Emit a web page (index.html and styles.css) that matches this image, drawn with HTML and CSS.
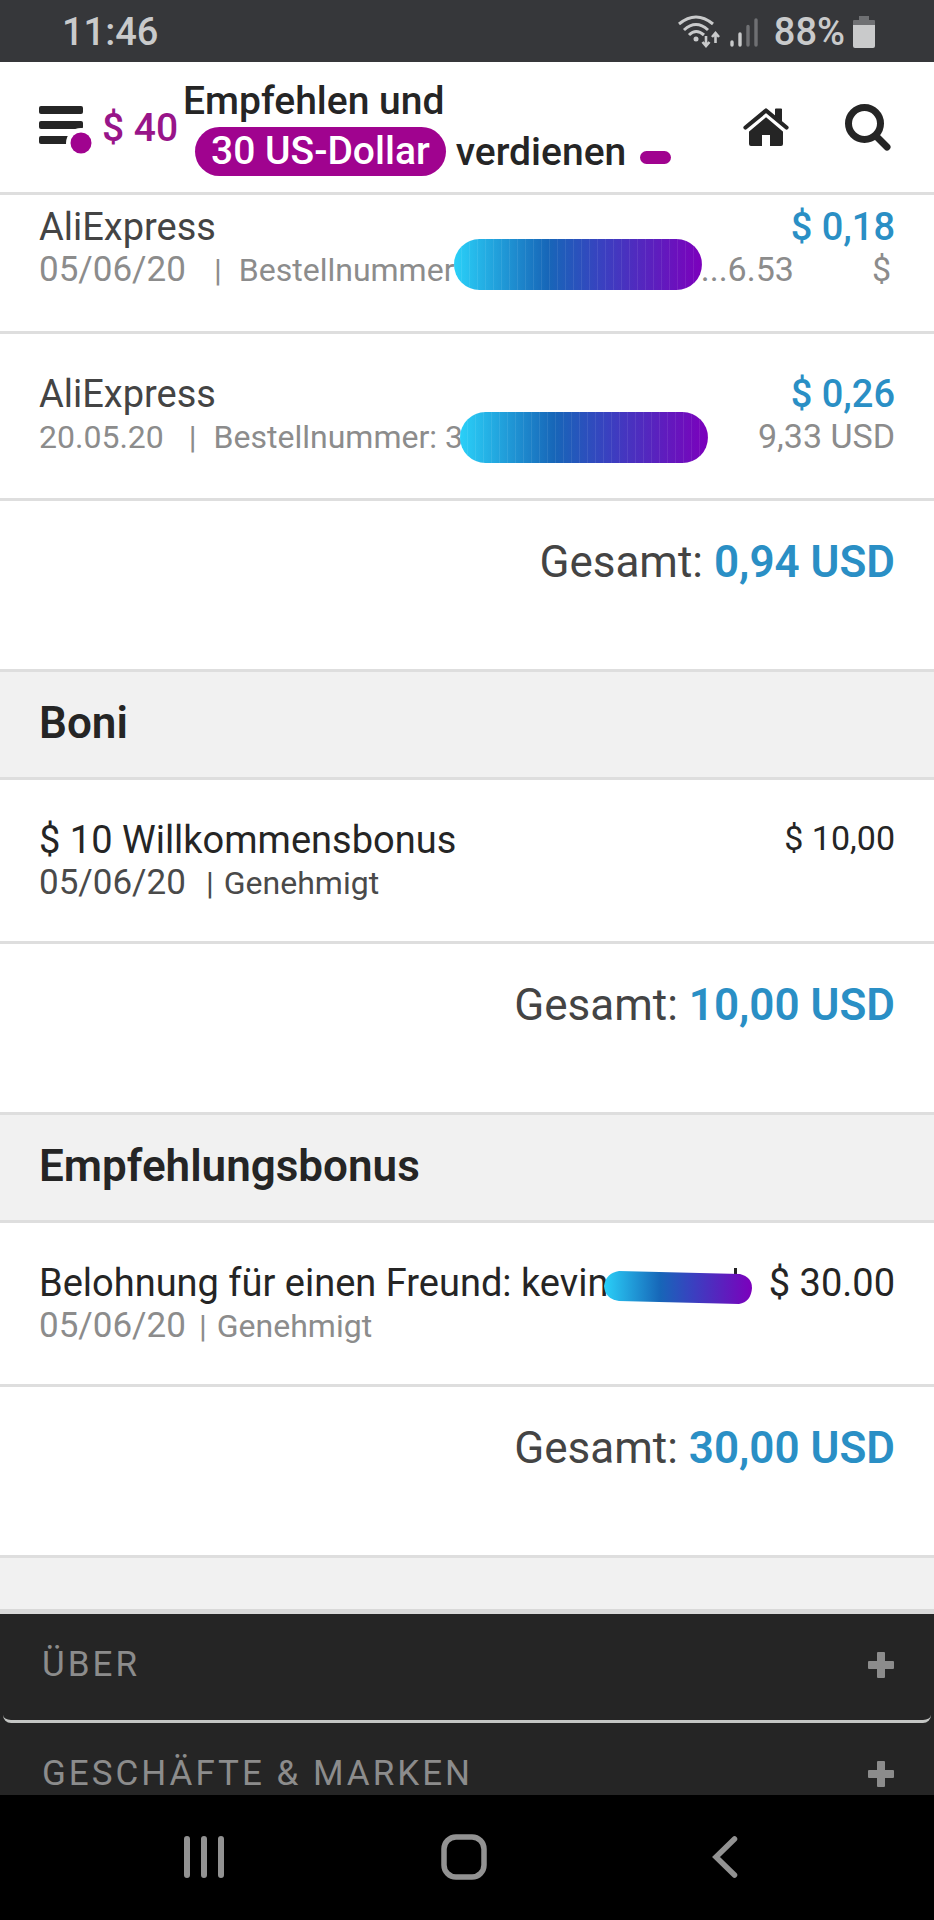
FILE: index.html
```html
<!DOCTYPE html>
<html lang="de">
<head>
<meta charset="utf-8">
<meta name="viewport" content="width=device-width, initial-scale=1">
<title>Cashback-Übersicht</title>
<link rel="stylesheet" href="styles.css">
</head>
<body>
<div class="screen">
  <div class="status">
    <span class="status-time">11:46</span>
    <div class="status-icons">
      <svg width="42" height="34" viewBox="0 0 42 34" aria-hidden="true">
        <g fill="none" stroke="#c9cacb" stroke-width="3">
          <path d="M1 9Q18-5 35 9"/>
          <path d="M6 15Q18 4 30 15"/>
          <path d="M11 20Q18 13 26 20"/>
          <path stroke-width="2.6" d="M28 21v10M24.500 27l3.500 4 3.500-4M37.500 28V18M34 22l3.500-4 3.500 4"/>
        </g>
        <circle cx="18" cy="24" r="2.500" fill="#c9cacb"/>
      </svg>
      <svg class="signal" width="28" height="31" viewBox="0 0 28 31" aria-hidden="true">
        <g stroke-width="3.400" stroke-linecap="round">
          <path stroke="#c9cacb" d="M2 25v3M10 17v11"/>
          <path stroke="#6f7073" d="M18 9.500V28M26 3v25"/>
        </g>
      </svg>
      <span class="status-level">88%</span>
      <svg width="22" height="32" viewBox="0 0 22 32" aria-hidden="true">
        <path fill="#6f7073" d="M6 0h10v4h5q1 0 1 1v5H0V5q0-1 1-1h5z"/>
        <path fill="#c9cacb" d="M0 9h22v21q0 2-2 2H2q-2 0-2-2z"/>
      </svg>
    </div>
  </div>

  <header class="header">
    <button class="menu" aria-label="Menü">
      <svg width="53" height="48" viewBox="0 0 53 48" aria-hidden="true">
        <g fill="#252525">
          <rect width="44" height="8" rx="2"/>
          <rect y="15" width="44" height="8" rx="2"/>
          <rect y="30" width="44" height="8" rx="2"/>
        </g>
        <circle cx="42" cy="37" r="15" fill="#fff"/>
        <circle cx="42" cy="37" r="10.500" fill="#a0038f"/>
      </svg>
    </button>
    <a class="balance" href="#">$ 40</a>
    <a class="promo" href="#">
      <span class="promo-top">Empfehlen und</span>
      <span class="promo-bottom"><span class="promo-pill">30 US-Dollar</span><span>verdienen</span><span class="promo-dash"></span></span>
    </a>
    <nav class="actions">
      <a href="#" aria-label="Startseite">
        <svg width="46" height="40" viewBox="0 0 46 40" aria-hidden="true">
          <path fill="#252525" d="M6 21L23 7l17 14v15q0 2-2 2H27V27h-8v11H8q-2 0-2-2z"/>
          <path fill="#252525" d="M32 1h7v16l-7-6z"/>
          <path fill="none" stroke="#fff" stroke-width="8" d="M0 23.500L23 4l23 19.500"/>
          <path fill="#252525" d="M32 1q0-.500 1-.500h5q1 0 1 1V14l-7-6z"/>
          <path fill="none" stroke="#252525" stroke-width="4.200" stroke-linecap="round" stroke-linejoin="round" d="M2.500 19.500L23 2.500l20.500 17"/>
        </svg>
      </a>
      <button aria-label="Suchen">
        <svg width="46" height="47" viewBox="0 0 46 47" aria-hidden="true">
          <circle cx="19.500" cy="19.500" r="16" fill="none" stroke="#252525" stroke-width="7"/>
          <path fill="none" stroke="#252525" stroke-width="7" stroke-linecap="round" d="M31 32l11 11"/>
        </svg>
      </button>
    </nav>
  </header>

  <main class="content">
    <section>
      <article class="row row-first">
        <div>
          <div class="name">AliExpress</div>
          <div class="meta"><span class="date">05/06/20</span><span class="bar-wide">|</span><span>Bestellnummer</span></div>
        </div>
        <div class="side">
          <div class="amount cash">$ 0,18</div>
          <div class="price"><span>...6.53</span><span class="currency">$</span></div>
        </div>
        <span class="redact redact-a"></span>
      </article>
      <article class="row">
        <div>
          <div class="name">AliExpress</div>
          <div class="meta"><span>20.05.20</span><span class="bar-wide">|</span><span>Bestellnummer: 3</span></div>
        </div>
        <div class="side">
          <div class="amount cash">$ 0,26</div>
          <div class="price">9,33 USD</div>
        </div>
        <span class="redact redact-b"></span>
      </article>
      <p class="total">Gesamt: <strong>0,94 USD</strong></p>
    </section>

    <section>
      <h2 class="heading">Boni</h2>
      <article class="row row-bonus">
        <div>
          <div class="name dark">$ 10 Willkommensbonus</div>
          <div class="meta meta-dark"><span class="date">05/06/20</span><span class="bar-mid">|</span><span>Genehmigt</span></div>
        </div>
        <div class="side"><div class="price dark">$ 10,00</div></div>
      </article>
      <p class="total">Gesamt: <strong>10,00 USD</strong></p>
    </section>

    <section>
      <h2 class="heading">Empfehlungsbonus</h2>
      <article class="row row-bonus">
        <div>
          <div class="name dark">Belohnung für einen Freund: kevin</div>
          <div class="meta"><span class="date">05/06/20</span><span class="bar-tight">|</span><span>Genehmigt</span></div>
        </div>
        <div class="side"><div class="amount dark">$ 30.00</div></div>
        <svg class="redact-name" width="148" height="36" viewBox="0 0 148 36" aria-hidden="true">
          <defs>
            <linearGradient id="ink">
              <stop offset="0" stop-color="#2ad0f8"/>
              <stop offset=".380" stop-color="#1766b8"/>
              <stop offset=".600" stop-color="#3a40c0"/>
              <stop offset="1" stop-color="#7c00bc"/>
            </linearGradient>
          </defs>
          <path fill="#252525" d="M130 0h3v10h-3z"/>
          <path fill="url(#ink)" d="M15 3L136 6Q148 9 148 20Q147 34 135 36L15 33Q1 31 0 18Q2 5 15 3z"/>
        </svg>
      </article>
      <p class="total">Gesamt: <strong>30,00 USD</strong></p>
    </section>

    <div class="spacer"></div>

    <footer class="footer">
      <button class="fold">
        <span>ÜBER</span>
        <svg width="26" height="26" viewBox="0 0 26 26" aria-hidden="true"><path fill="#8c8c8c" d="M10 0h6q1 0 1 1v8h8q1 0 1 1v6q0 1-1 1h-8v8q0 1-1 1h-6q-1 0-1-1v-8H1q-1 0-1-1v-6q0-1 1-1h8V1q0-1 1-1z"/></svg>
      </button>
      <button class="fold">
        <span>GESCHÄFTE &amp; MARKEN</span>
        <svg width="26" height="26" viewBox="0 0 26 26" aria-hidden="true"><path fill="#8c8c8c" d="M10 0h6q1 0 1 1v8h8q1 0 1 1v6q0 1-1 1h-8v8q0 1-1 1h-6q-1 0-1-1v-8H1q-1 0-1-1v-6q0-1 1-1h8V1q0-1 1-1z"/></svg>
      </button>
    </footer>
  </main>

  <nav class="system">
    <button aria-label="Letzte Apps">
      <svg width="40" height="46" viewBox="0 0 40 46" aria-hidden="true"><path fill="none" stroke="#929292" stroke-width="6" stroke-linecap="round" d="M3 5v36M20 5v36M37 5v36"/></svg>
    </button>
    <button aria-label="Home">
      <svg width="46" height="46" viewBox="0 0 46 46" aria-hidden="true"><rect x="3" y="3" width="40" height="40" rx="12" fill="none" stroke="#929292" stroke-width="5.500"/></svg>
    </button>
    <button aria-label="Zurück">
      <svg width="26" height="46" viewBox="0 0 26 46" aria-hidden="true"><path fill="none" stroke="#929292" stroke-width="5.500" stroke-linecap="round" d="M22.500 5L4 23l18.500 18"/></svg>
    </button>
  </nav>
</div>
</body>
</html>
```

FILE: styles.css
```css
* { box-sizing: border-box; }

body {
  margin: 0;
  background: #fff;
  color: #444;
  font-family: Roboto, "Liberation Sans", sans-serif;
}

button {
  margin: 0;
  padding: 0;
  border: 0;
  background: none;
  color: inherit;
  font: inherit;
}

a { color: inherit; text-decoration: none; }
svg { display: block; }

.screen {
  display: flex;
  flex-direction: column;
  height: 100vh;
}

/* Phone status bar */
.status {
  display: flex;
  align-items: center;
  justify-content: space-between;
  flex: none;
  padding: 9px 59px 7px 62px;
  background: #36373a;
  color: #c9cacb;
  font-size: 38px;
  font-weight: 500;
  line-height: 46px;
}

.status-icons { display: flex; align-items: center; }
.signal { margin-left: 10px; }
.status-level { margin: 0 8px 0 16px; }

/* Page header */
.header {
  display: flex;
  align-items: center;
  flex: none;
  padding: 17px 43px 16px 39px;
  border-bottom: 3px solid #dedede;
  color: #252525;
  font-size: 39px;
  font-weight: 500;
}

.menu { padding-top: 4px; }

.balance {
  width: 81px;
  margin-left: 10px;
  color: #981589;
  white-space: nowrap;
}

.promo {
  display: flex;
  flex-direction: column;
  gap: 4px;
  line-height: 44px;
  white-space: nowrap;
}

.promo-bottom {
  display: flex;
  align-items: center;
  padding-left: 12px;
}

.promo-pill {
  margin-right: 10px;
  padding: 2px 16px 3px;
  border-radius: 25px;
  background: #a0038f;
  color: #fff;
}

.promo-dash {
  width: 31px;
  height: 13px;
  margin: 12px 0 0 14px;
  border-radius: 7px;
  background: #a0038f;
}

.actions {
  display: flex;
  align-items: center;
  gap: 56px;
  margin-left: auto;
}

/* Transactions */
.content {
  display: flex;
  flex: 1;
  flex-direction: column;
  min-height: 0;
  overflow: hidden;
}

.content > * { flex: none; }

.row {
  position: relative;
  display: flex;
  justify-content: space-between;
  padding: 38px 39px 40px;
  border-bottom: 3px solid #dedede;
  white-space: nowrap;
}

.row-first { padding-top: 10px; }
.row-bonus { padding-bottom: 37px; }

.name, .amount {
  font-size: 38px;
  line-height: 44px;
}

.meta {
  display: flex;
  align-items: baseline;
  color: #8c8c8c;
  font-size: 32px;
  line-height: 42px;
}

.meta-dark { color: #4a4a4a; }
.date { min-width: 150px; font-size: 35px; }
.bar-wide { margin: 0 17px 0 25px; }
.bar-mid { margin: 0 10px 0 17px; }
.bar-tight { margin: 0 10px; }

.side { text-align: right; }
.cash { color: #2a8fc5; font-weight: 500; }

.price {
  color: #8c8c8c;
  font-size: 34px;
  line-height: 40px;
}

.currency { margin: 0 4px 0 78px; }
.amount.dark, .price.dark, .name.dark { color: #252525; }

.redact {
  position: absolute;
  width: 248px;
  height: 51px;
  border-radius: 26px;
  background:
    repeating-linear-gradient(90deg, transparent 0 7px, rgba(255, 255, 255, .08) 7px 8px),
    linear-gradient(90deg, #2ad0f8, #1766b8 38%, #3a40c0 60%, #7c00bc);
}

.redact-a { top: 44px; left: 454px; }
.redact-b { top: 78px; left: 460px; }
.redact-name { position: absolute; top: 45px; left: 604px; }

.total {
  margin: 0;
  padding: 35px 39px 81px;
  border-bottom: 3px solid #dedede;
  font-size: 44px;
  line-height: 52px;
  text-align: right;
}

.total strong { color: #2a8fc5; font-weight: 600; }

.heading {
  margin: 0;
  padding: 26px 39px 29px;
  border-bottom: 3px solid #dedede;
  background: #f1f1f1;
  color: #252525;
  font-size: 44px;
  font-weight: 600;
  line-height: 50px;
}

.spacer {
  height: 56px;
  border-bottom: 5px solid #d9d9d9;
  background: #f1f1f1;
}

/* Page footer */
.footer { background: #252525; color: #8c8c8c; }

.fold {
  display: flex;
  align-items: center;
  justify-content: space-between;
  width: calc(100% - 6px);
  margin: 0 3px;
  padding: 30px 37px 35px 39px;
  border-bottom: 3px solid #c4c6c4;
  border-radius: 0 0 8px 8px;
  font-size: 35px;
  letter-spacing: 3px;
  line-height: 41px;
}

/* Phone navigation bar */
.system {
  display: flex;
  justify-content: center;
  flex: none;
  padding-right: 5px;
  background: #000;
}

.system button {
  display: flex;
  justify-content: center;
  width: 28%;
  padding: 39px 0 40px;
}
```
